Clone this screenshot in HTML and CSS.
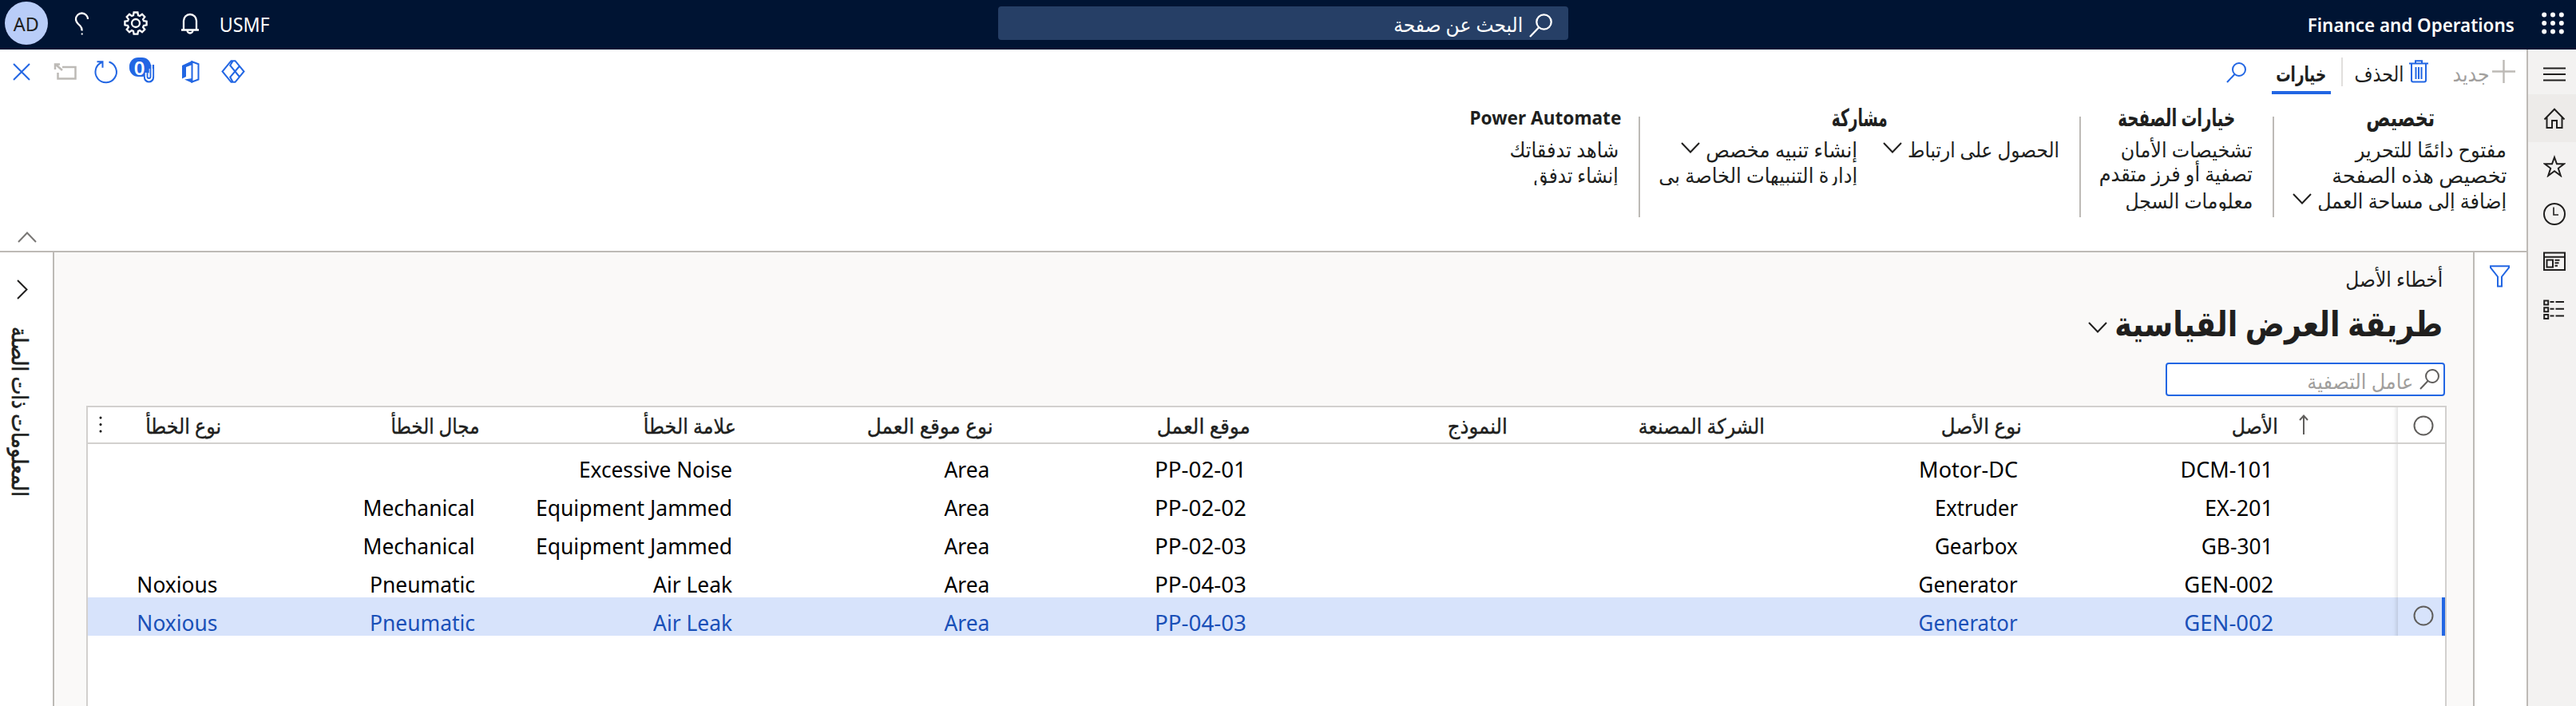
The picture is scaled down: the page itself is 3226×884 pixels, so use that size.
FILE: index.html
```html
<!DOCTYPE html>
<html lang="ar" dir="rtl">
<head>
<meta charset="utf-8">
<title>Finance and Operations</title>
<link rel="stylesheet" href="styles.css">
</head>
<body>
<header class="topbar">
  <svg class="waffle" viewBox="0 0 28 28"><g fill="#fff"><circle cx="3.2" cy="3.5" r="3"/><circle cx="14" cy="3.5" r="3"/><circle cx="24.8" cy="3.5" r="3"/><circle cx="3.2" cy="14" r="3"/><circle cx="14" cy="14" r="3"/><circle cx="24.8" cy="14" r="3"/><circle cx="3.2" cy="24.5" r="3"/><circle cx="14" cy="24.5" r="3"/><circle cx="24.8" cy="24.5" r="3"/></g></svg>
  <div class="brand"><span class="t" data-w="259">Finance and Operations</span></div>
  <div class="page-search">
    <svg width="29" height="30" viewBox="0 0 29 30" class="line white"><circle cx="18.5" cy="10.5" r="9.2"/><path d="M12 17.500L1 29"/></svg>
    <span class="t" data-w="162">البحث عن صفحة</span>
  </div>
  <div class="top-tools">
    <span class="company t" data-w="63">USMF</span>
    <svg width="24" height="27" viewBox="0 0 24 27" class="line white bell"><path d="M1 21.500H23M4 21V10a8 8 0 0 1 16 0V21M8.500 22a3.500 3.500 0 0 0 7 0"/></svg>
    <svg width="30" height="30" viewBox="0 0 30 30" class="line white gear"><circle cx="15" cy="15" r="5"/><path d="M12.600 1.500h4.800l.6 3.600 2 .9 3-2.200 3.300 3.300-2.200 3 .9 2 3.600.6v4.700l-3.600.6-.9 2 2.200 3-3.300 3.300-3-2.200-2 .9-.6 3.600h-4.800l-.6-3.600-2-.9-3 2.200-3.300-3.300 2.200-3-.9-2-3.600-.6v-4.700l3.600-.6.9-2-2.200-3 3.300-3.300 3 2.200 2-.9z"/></svg>
    <svg width="18" height="30" viewBox="0 0 18 30" class="line white help"><path d="M17 9a7.500 7.500 0 0 0-15 0c0 4 3 6 5.500 8.500 1.700 1.700 2.200 2.500 2.200 6"/><rect x="8.700" y="26.500" width="2" height="2" fill="#fff" stroke="none"/></svg>
    <div class="avatar"><span class="t" data-w="32">AD</span></div>
  </div>
</header>
<div class="shell">
  <nav class="rail">
    <div class="rail-item menu"><svg width="28" height="28" viewBox="0 0 28 28" class="line dark"><path d="M0 6.500h28M0 14h28M0 21.500h28"/></svg></div>
    <div class="rail-item current"><svg width="28" height="28" viewBox="0 0 28 28" class="line dark"><path d="M1.500 15.500L14 2.800l12.500 12.700M4.500 13v13h6.500v-9h6v9h6.500V13"/></svg></div>
    <div class="rail-item"><svg width="28" height="28" viewBox="0 0 28 28" class="line dark"><path d="M14 3L17 11.300H26L18.800 16.800L21.800 26L14 20.300L6.200 26L9.200 16.800L2 11.300H11z"/></svg></div>
    <div class="rail-item"><svg width="28" height="28" viewBox="0 0 28 28" class="line dark"><circle cx="14" cy="14" r="13"/><path d="M13 5.500v9.500h6" stroke-width="1.600"/></svg></div>
    <div class="rail-item"><svg width="28" height="28" viewBox="0 0 28 28" class="line dark"><path d="M1 2.500h26v21.500H1zM1 7.700h26M4.500 11.500h7.500v9H4.500zM14.500 11.700h6M14.500 15.200h5M14.500 18.800h3.500"/></svg></div>
    <div class="rail-item"><svg width="28" height="28" viewBox="0 0 28 28" class="line dark"><path d="M1.200 2.500h5v5h-5zM1.200 11.200h5v5h-5zM1.200 20h5v5h-5zM8.500 4h5M15.500 4h10.500M8.500 12.700h5M15.500 12.700h10.500M8.500 21.400h5M15.500 21.400h10.500"/></svg></div>
  </nav>
  <div class="workspace">
    <section class="ribbon">
      <div class="commands">
        <div class="cmd new"><svg width="29" height="29" viewBox="0 0 29 29"><path d="M14.500 0v29M0 14.500h29" stroke="#bdbab6" stroke-width="2.400"/></svg><span class="t" data-w="46">جديد</span></div>
        <div class="cmd delete"><svg width="24" height="29" viewBox="0 0 24 29" class="line blue"><path d="M0 4.500h24M8 4V1.300h8V4M3 5v20.500a2 2 0 0 0 2 2h14a2 2 0 0 0 2-2V5M8.500 9v15M12 9v15M15.500 9v15"/></svg><span class="t" data-w="62">الحذف</span></div>
        <div class="cmd-sep"></div>
        <div class="cmd tab"><span class="t" data-w="63">خيارات</span></div>
        <svg class="line blue find" width="25" height="26" viewBox="0 0 25 26"><circle cx="16" cy="9" r="8"/><path d="M10.500 15L1 25"/></svg>
        <div class="window-tools">
          <svg width="30" height="30" viewBox="0 0 30 30" class="line blue"><path d="M17.500 1.200h-5L1.500 14.500l11 13.300h5L28.500 14.500zM14.500 1.500L11.200 7l12 14.500M23.200 7.500l-12 14 3.300 6"/></svg>
          <svg class="office" width="22" height="28" viewBox="0 0 22 28"><path d="M0 6L13 0v5L5 8v12l-5 2.500zM3 23.500L13 22v6z" fill="#2266e3"/><path d="M12.500 1.200l8 3V23.500l-8 3z" fill="none" stroke="#2266e3" stroke-width="2"/></svg>
          <svg class="attach" width="33" height="33" viewBox="0 0 33 33"><rect x="0" y="0" width="27" height="24" rx="11" fill="#2266e3"/><path d="M30 9v16a5.500 5.500 0 0 1-11 0v-7" fill="none" stroke="#2266e3" stroke-width="2.200"/><path d="M27 14v10a2.500 2.500 0 0 1-5 0v-5" fill="none" stroke="#fff" stroke-width="4.500"/><path d="M26.500 9v15a2 2 0 0 1-4 0v-5" fill="none" stroke="#2266e3" stroke-width="1.800"/><text x="12.500" y="21.500" text-anchor="middle" class="count">0</text></svg>
          <svg class="refresh line blue" width="30" height="30" viewBox="0 0 30 30"><path d="M18.500 2.500A13.200 13.200 0 1 1 9.500 3M3.500 2.200h7v7.500"/></svg>
          <svg class="popout line" width="28" height="21" viewBox="0 0 28 21"><path d="M10 5h16.500v14.500h-22V12M1 8V1.500h6M2 2l8 7" stroke="#bdbab6" stroke-width="2.500"/></svg>
          <svg class="close line blue" width="22" height="22" viewBox="0 0 22 22"><path d="M1 1l20 20M21 1L1 21"/></svg>
        </div>
      </div>
      <div class="groups">
        <div class="group g1">
          <h3><span class="t" data-w="86">تخصيص</span></h3>
          <div class="cols"><ul>
            <li><span class="t" data-w="189">مفتوح دائمًا للتحرير</span></li>
            <li><span class="t" data-w="219">تخصيص هذه الصفحة</span></li>
            <li><span class="t" data-w="237">إضافة إلى مساحة العمل</span><svg class="chev" viewBox="0 0 24 14"><path d="M1 1l11 11.500L23 1"/></svg></li>
          </ul></div>
        </div>
        <div class="sep"></div>
        <div class="group g2">
          <h3><span class="t" data-w="147">خيارات الصفحة</span></h3>
          <div class="cols"><ul>
            <li><span class="t" data-w="165">تشخيصات الأمان</span></li>
            <li class="raised"><span class="t" data-w="192">تصفية أو فرز متقدم</span></li>
            <li><span class="t" data-w="160">معلومات السجل</span></li>
          </ul></div>
        </div>
        <div class="sep"></div>
        <div class="group g3">
          <h3><span class="t" data-w="70">مشاركة</span></h3>
          <div class="cols">
            <ul class="wide"><li><span class="t" data-w="190">الحصول على ارتباط</span><svg class="chev" viewBox="0 0 24 14"><path d="M1 1l11 11.500L23 1"/></svg></li></ul>
            <ul><li><span class="t" data-w="190">إنشاء تنبيه مخصص</span><svg class="chev" viewBox="0 0 24 14"><path d="M1 1l11 11.500L23 1"/></svg></li>
            <li><span class="t" data-w="249">إدارة التنبيهات الخاصة بي</span></li></ul>
          </div>
        </div>
        <div class="sep"></div>
        <div class="group g4">
          <h3 class="latin"><span class="t" data-w="190">Power Automate</span></h3>
          <div class="cols"><ul>
            <li><span class="t" data-w="137">شاهد تدفقاتك</span></li>
            <li><span class="t" data-w="106">إنشاء تدفق</span></li>
          </ul></div>
        </div>
      </div>
      <svg class="collapse" viewBox="0 0 24 14"><path d="M1 13L12 1.500 23 13"/></svg>
    </section>
    <div class="content">
      <aside class="filter-pane"><svg width="25" height="28" viewBox="0 0 25 28" class="line blue"><path d="M1 1.200h23v2L15 14.500v12h-5v-12L1 3.200z"/></svg></aside>
      <main class="page">
        <div class="caption"><span class="t" data-w="122">أخطاء الأصل</span></div>
        <div class="view"><h1><span class="t" data-w="411">طريقة العرض القياسية</span></h1><svg class="chev" viewBox="0 0 24 14"><path d="M1 1l11 11.500L23 1"/></svg></div>
        <div class="quick"><svg width="25" height="26" viewBox="0 0 25 26" class="line gray"><circle cx="16" cy="9" r="8"/><path d="M10.500 15L1 25"/></svg><span class="t" data-w="133">عامل التصفية</span></div>
        <div class="grid" id="grid"></div>
      </main>
      <aside class="facts">
        <svg width="14" height="25" viewBox="0 0 14 25" class="line dark"><path d="M1 1l11.500 11.500L1 24"/></svg>
        <div class="vertical"><span data-h="213">المعلومات ذات الصلة</span></div>
      </aside>
    </div>
  </div>
</div>
<script src="app.js"></script>
</body>
</html>
```
FILE: styles.css
```css
* { box-sizing: border-box; }
body { margin: 0; width: 3226px; height: 884px; overflow: hidden; background: #fff; color: #201f1e; font-family: "Noto Sans", "DejaVu Sans", sans-serif; font-size: 26px; }
svg { display: block; flex: none; }
h1, h3, ul { margin: 0; padding: 0; font-weight: 600; }
ul { list-style: none; font-weight: 400; }
.t { display: inline-block; white-space: nowrap; flex: none; }
.t > i { display: inline-block; font-style: normal; transform-origin: right center; }
.line { fill: none; stroke-width: 2; }
.white { stroke: #fff; stroke-width: 2.3; }
.blue { stroke: #2266e3; }
.dark { stroke: #201f1e; }
.gray { stroke: #605e5c; }

.topbar { display: flex; height: 62px; background: #001433; color: #fff; line-height: 61px; padding-right: 15px; font-size: 25px; }
.waffle { width: 28px; height: 28px; margin-top: 15px; }
.brand { width: 1219px; padding-right: 34px; font-weight: 600; font-size: 24px; }
.page-search { display: flex; width: 714px; height: 42px; margin-top: 8px; padding-right: 20px; gap: 8px; border-radius: 4px; background: #263f66; line-height: 44px; }
.page-search svg { margin-top: 9px; }
.top-tools { display: flex; flex: 1; padding-right: 912px; }
.bell { margin: 16px 25px 0 0; }
.gear { margin: 14px 41px 0 0; }
.help { margin: 15px 44px 0 0; }
.avatar { width: 54px; height: 54px; margin: 2px 33px 0 0; border-radius: 50%; background: #b9cdf8; color: #201f1e; text-align: center; line-height: 56px; font-size: 24px; }

.shell { display: flex; height: 822px; }
.rail { width: 62px; border-left: 2px solid #bdbab6; background: #f3f2f1; }
.rail-item { display: flex; align-items: center; justify-content: center; height: 60px; padding-left: 5px; }
.rail-item.menu { height: 56px; padding-top: 6px; }
.rail-item.current { background: #edebe9; }
.workspace { flex: 1; display: flex; flex-direction: column; }

.ribbon { height: 254px; border-bottom: 2px solid #bdbab6; }
.commands { display: flex; height: 56px; }
.cmd { display: flex; line-height: 60px; }
.new { padding-right: 14px; gap: 3px; color: #a19f9d; }
.new svg, .delete svg { margin-top: 13px; }
.delete { padding-right: 31px; gap: 6px; }
.cmd-sep { width: 2px; height: 36px; margin: 10px 15px 0 13px; background: #e1dfdd; }
.tab { width: 74px; justify-content: center; border-bottom: 4px solid #2266e3; font-weight: 600; }
.find { margin: 16px 32px 0 0; }
.window-tools { display: flex; flex: 1; justify-content: flex-end; padding-left: 16px; }
.window-tools svg { margin-top: 13px; overflow: visible; }
.window-tools .office { margin: 14px 27px 0 0; }
.window-tools .attach { margin: 10px 33px 0 0; }
.window-tools .refresh { margin-right: 14px; }
.window-tools .popout { margin: 17px 22px 0 0; }
.window-tools .close { margin: 17px 30px 0 0; }
.count { fill: #fff; font-size: 24px; font-family: "Noto Sans", sans-serif; font-weight: 600; }
.groups { display: flex; height: 154px; }
.sep { width: 2px; height: 126px; margin-top: 28px; background: #bdbab6; }
.group h3 { height: 53px; line-height: 56px; text-align: center; }
.group .latin { font-size: 24px; font-weight: 700; line-height: 57px; }
.g1 { width: 316px; }
.g2 { width: 240px; }
.g3 { width: 550px; }
.g4 { width: 234px; }
.cols { display: flex; padding-right: 25px; }
.wide { width: 253px; }
.cols li { display: flex; height: 32px; line-height: 32px; gap: 7px; }
.cols li:nth-child(n+2):last-child { clip-path: inset(-10px 0 3px 0); }
.cols .raised { margin-top: -2px; margin-bottom: 2px; }
.chev { width: 24px; height: 14px; margin-top: 7px; fill: none; stroke: #201f1e; stroke-width: 2; }
.collapse { width: 24px; height: 14px; margin: 18px auto 0 22px; fill: none; stroke: #797775; stroke-width: 2; }

.content { display: flex; flex: 1; background: #faf9f8; }
.filter-pane { width: 67px; padding: 16px 21px 0 0; border-left: 2px solid #bdbab6; background: #fff; }
.page { width: 3029px; padding-right: 33px; padding-left: 40px; }
.caption { height: 64px; padding: 0 5px; line-height: 67px; }
.view { display: flex; height: 74px; padding: 0 5px; gap: 9px; }
.view h1 { font-size: 44px; line-height: 48px; }
.view .chev { margin-top: 23px; }
.quick { display: flex; width: 350px; height: 42px; margin-right: 2px; padding-right: 5px; gap: 8px; border: 2px solid #2266e3; border-radius: 4px; background: #fff; color: #a19f9d; line-height: 42px; }
.quick svg { margin-top: 6px; }
.grid { height: 376px; margin-top: 12px; border: 2px solid #d2d0ce; border-bottom: 0; background: #fff; }
.row { display: grid; grid-template-columns: 59px 471px repeat(6, 322px) 323px 167px; grid-template-rows: 100%; height: 48px; color: #000; font-size: 28px; line-height: 62px; }
.row.head { height: 46px; border-bottom: 2px solid #d2d0ce; color: #201f1e; font-size: 26px; -webkit-text-stroke: .4px #201f1e; line-height: 46px; }
.row.selected { background: #d7e3fb; color: #1a50b8; }
.cell { display: flex; padding-right: 5px; white-space: nowrap; }
.row.head .cell { padding-right: 0; }
.row .cell.first { padding-right: 156px; box-shadow: inset -7px 0 5px -5px rgba(0, 0, 0, .13); }
.row.head .cell.first { padding-right: 112px; }
.pick { display: flex; justify-content: flex-start; padding-right: 14px; }
.pick svg { margin-top: 10px; }
.selected .pick { border-right: 4px solid #2266e3; padding-right: 10px; }
.arrow { margin: 9px 0 0 26px; }
.more { margin: 11px auto 0 14px; }

.facts { width: 68px; padding-left: 21px; padding-top: 34px; border-right: 2px solid #bdbab6; background: #fff; }
.facts > svg { margin-right: 31px; }
.vertical { width: 40px; height: 213px; margin: 34px 21px 0 0; writing-mode: vertical-rl; font-size: 27px; -webkit-text-stroke: .7px #201f1e; line-height: 40px; white-space: nowrap; }
.vertical span { display: inline-block; transform-origin: center bottom; }
```
FILE: app.js
```js
const heads = [['الأصل', 58], ['نوع الأصل', 101], ['الشركة المصنعة', 158], ['النموذج', 75], ['موقع العمل', 117], ['نوع موقع العمل', 158], ['علامة الخطأ', 116], ['مجال الخطأ', 111], ['نوع الخطأ', 95]];
const widths = {
  'DCM-101': 116, 'EX-201': 86, 'GB-301': 90, 'GEN-002': 112,
  'Motor-DC': 124, 'Extruder': 104, 'Gearbox': 104, 'Generator': 124,
  'PP-02-01': 115, 'PP-02-02': 115, 'PP-02-03': 115, 'PP-04-03': 115, 'Area': 57,
  'Excessive Noise': 192, 'Equipment Jammed': 246, 'Air Leak': 99,
  'Mechanical': 140, 'Pneumatic': 132, 'Noxious': 101
};
const rows = [
  ['DCM-101', 'Motor-DC', '', '', 'PP-02-01', 'Area', 'Excessive Noise', '', ''],
  ['EX-201', 'Extruder', '', '', 'PP-02-02', 'Area', 'Equipment Jammed', 'Mechanical', ''],
  ['GB-301', 'Gearbox', '', '', 'PP-02-03', 'Area', 'Equipment Jammed', 'Mechanical', ''],
  ['GEN-002', 'Generator', '', '', 'PP-04-03', 'Area', 'Air Leak', 'Pneumatic', 'Noxious'],
  ['GEN-002', 'Generator', '', '', 'PP-04-03', 'Area', 'Air Leak', 'Pneumatic', 'Noxious']
];
const ring = '<svg width="26" height="26" viewBox="0 0 26 26" class="line gray"><circle cx="13" cy="13" r="11.500"/></svg>';
const arrow = '<svg class="arrow line gray" width="12" height="25" viewBox="0 0 12 25"><path d="M6 25V2M1 7l5-5.500L11 7"/></svg>';
const more = '<svg class="more" width="4" height="22" viewBox="0 0 4 22"><circle cx="2" cy="2" r="1.500"/><circle cx="2" cy="10.500" r="1.500"/><circle cx="2" cy="19" r="1.500"/></svg>';
const text = (s, w) => s ? `<span class="t" data-w="${w}">${s}</span>` : '';

let html = `<div class="row head"><div class="pick">${ring}</div>` + heads.map(([s, w], i) =>
  `<div class="cell ${i ? '' : 'first'}">${i ? '' : arrow}${text(s, w)}${i === 8 ? more : ''}</div>`).join('') + '</div>';
rows.forEach((r, n) => {
  const selected = n === 4;
  html += `<div class="row ${selected ? 'selected' : ''}"><div class="pick">${selected ? ring : ''}</div>` +
    r.map((s, i) => `<div class="cell ${i ? '' : 'first'}">${text(s, widths[s])}</div>`).join('') + '</div>';
});
document.getElementById('grid').innerHTML = html;

/* Condense each label to its allotted width. */
document.querySelectorAll('.t').forEach(el => {
  const inner = document.createElement('i');
  inner.textContent = el.textContent;
  el.textContent = '';
  el.append(inner);
  const natural = inner.getBoundingClientRect().width;
  const w = +el.dataset.w;
  el.style.width = w + 'px';
  inner.style.transform = `scaleX(${w / natural})`;
});
document.querySelectorAll('[data-h]').forEach(el => {
  el.style.transform = `scaleY(${el.dataset.h / el.getBoundingClientRect().height})`;
});
```
